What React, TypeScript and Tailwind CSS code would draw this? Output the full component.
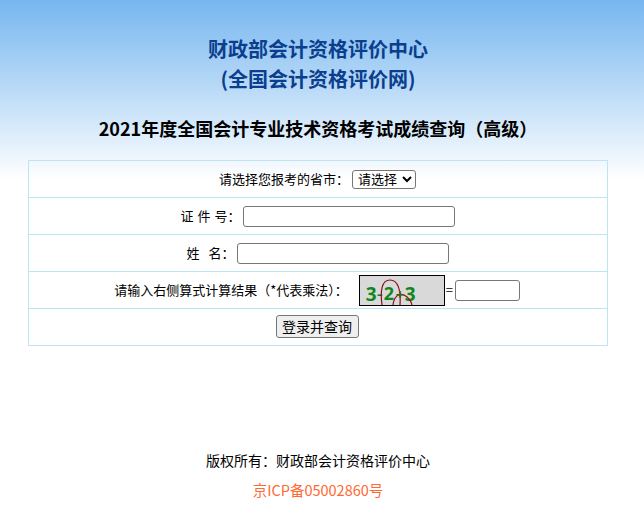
const FONT = "font-['Microsoft_YaHei','Noto_Sans_CJK_SC','Noto_Sans',sans-serif]";

function Row({ children, last }: { children: React.ReactNode; last?: boolean }) {
  return (
    <div className={`flex items-center justify-center ${last ? "h-[36px]" : "h-[37px] border-b border-[#bde4f4]"}`}>
      {children}
    </div>
  );
}

function Captcha() {
  return (
    <div className="relative flex h-[31px] w-[86px] items-start overflow-hidden border border-black bg-[#d9d9d9] pt-[8px] pl-[6px] font-['Noto_Sans',sans-serif] text-[19px] leading-[20px] font-bold text-[#12861a]">
      <span className="w-[11px]">3</span>
      <span className="w-[7px] font-normal">-</span>
      <span className="-mt-[1px] w-[12px] text-[18px]">2</span>
      <span className="relative z-10 w-[9px] text-[15px] text-[#4a5a10]">+</span>
      <span className="w-[11px]">3</span>
      <svg className="absolute top-0 left-0" width="84" height="29" viewBox="0 0 84 29" fill="none">
        <path d="M22 29 C20 14 22 4 30 4 C38 4 41 14 40 29" stroke="#8a1020" strokeWidth="1.2" />
        <path d="M33 29 C34 20 39 17 44 19 C48 21 51 25 52 29" stroke="#8a1020" strokeWidth="1.2" />
      </svg>
    </div>
  );
}

export default function App() {
  return (
    <div className={`h-[508px] w-[644px] overflow-hidden bg-[linear-gradient(#76b6f0_0px,#ffffff_180px)] text-[13px] text-black ${FONT}`}>
      <div className="w-[636px]">
        <div className="pt-[34px] text-center text-[20px] leading-[30px] font-bold text-[#0b3f8e]">
          <div>财政部会计资格评价中心</div>
          <div>(全国会计资格评价网)</div>
        </div>
        <h1 className="mt-[21px] text-center text-[18px] leading-[26px] font-bold">
          {"2021年度全国会计专业技术资格考试成绩查询\uFF08高级\uFF09"}
        </h1>
        <div className="mx-auto mt-[19px] h-[186px] w-[580px] border border-[#bde4f4]">
          <Row>
            <span>{"请选择您报考的省市\uFF1A"}</span>
            <select className="ml-[3px] mr-[1px] h-[19px] w-[64px] rounded-[3px] border border-[#767676] bg-white pl-[1px] font-['Liberation_Sans','Noto_Sans_CJK_SC',sans-serif] text-[13px] leading-none">
              <option>请选择</option>
            </select>
          </Row>
          <Row>
            <span className="whitespace-pre [word-spacing:1px]">{"证 件 号\uFF1A"}</span>
            <input className="ml-[3px] h-[21px] w-[212px] rounded-[3px] border border-[#767676] bg-white" />
          </Row>
          <Row>
            <span className="whitespace-pre [word-spacing:1.5px]">{"姓  名\uFF1A"}</span>
            <input className="ml-[3px] h-[21px] w-[212px] rounded-[3px] border border-[#767676] bg-white" />
          </Row>
          <Row>
            <span>{"请输入右侧算式计算结果\uFF08*代表乘法\uFF09\uFF1A"}</span>
            <span className="ml-[11px]"><Captcha /></span>
            <span className="ml-[1px] w-[9px]">=</span>
            <input className="mr-[2px] h-[21px] w-[65px] rounded-[3px] border border-[#767676] bg-white" />
          </Row>
          <Row last>
            <button className="mr-[2px] mb-[2px] h-[23px] w-[83px] rounded-[3px] border border-[#767676] bg-[#efefef] text-[14px] leading-none">登录并查询</button>
          </Row>
        </div>
        <div className="mt-[104px] text-center text-[14px] leading-[20px]">{"版权所有\uFF1A财政部会计资格评价中心"}</div>
        <div className="mt-[10px] text-center text-[14.5px] leading-[20px] text-[#ff6a33]">京ICP备05002860号</div>
      </div>
    </div>
  );
}
